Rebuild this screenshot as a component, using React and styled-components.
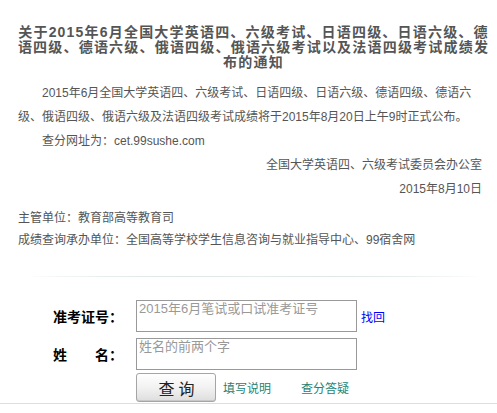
import React from "react";
import styled, { createGlobalStyle } from "styled-components";

const GlobalStyle = createGlobalStyle`
  html, body { margin: 0; padding: 0; background: #fff; }
  body { font-family: "Liberation Sans", "Noto Sans CJK SC", sans-serif; }
`;

const Page = styled.div`
  width: 497px;
  background: #fff;
`;

const Article = styled.div`
  padding: 25px 15px 0 18px;
  color: #555;
`;

const Title = styled.h1`
  margin: 0 -15px 0 -8px;
  font-size: 14px;
  font-weight: bold;
  line-height: 15px;
  letter-spacing: 1.2px;
  text-align: center;
  color: #555;
  white-space: nowrap;
`;

const Body = styled.div`
  margin-top: 11px;
  font-size: 12px;
  line-height: 24px;
`;

const Para = styled.p`
  margin: 0;
  text-indent: ${(p) => (p.$indent ? "24px" : "0")};
  text-align: ${(p) => (p.$right ? "right" : "left")};
`;

const Info = styled.div`
  margin-top: 6px;
  font-size: 12px;
  line-height: 22px;
`;

const Divider = styled.div`
  margin: 25px -1px 0 7px;
  height: 1px;
  background: linear-gradient(90deg, rgba(196, 210, 210, 0) 0%, #c2d0d0 50%, rgba(196, 210, 210, 0) 100%);
  &::after {
    content: "";
    display: block;
    height: 1px;
    margin-top: 1px;
    background: linear-gradient(90deg, rgba(230, 236, 236, 0) 0%, #e6ecec 50%, rgba(230, 236, 236, 0) 100%);
  }
`;

const QueryForm = styled.form`
  margin: 0;
  padding: 23px 0 1px 53px;
  border-bottom: 1px solid #ddd;
`;

const FieldRow = styled.div`
  display: flex;
  align-items: center;
  margin-bottom: ${(p) => p.$gap}px;
`;

const Label = styled.label`
  width: 83px;
  font-family: "Noto Sans CJK SC", sans-serif;
  font-size: 14px;
  font-weight: bold;
  color: #000;
  white-space: pre;
`;

const Field = styled.textarea`
  display: block;
  box-sizing: border-box;
  width: 221px;
  height: 32px;
  margin: 0;
  padding: 0 2px;
  border: 1px solid #999;
  font-family: "Liberation Sans", "Noto Sans CJK SC", sans-serif;
  font-size: 13px;
  line-height: 15px;
  resize: none;
  overflow: hidden;
  outline: none;
  &::placeholder { color: #999; }
`;

const FindLink = styled.a`
  margin-left: 4px;
  font-size: 12px;
  color: #0000ff;
  text-decoration: none;
`;

const ActionRow = styled.div`
  display: flex;
  align-items: center;
  padding-left: 83px;
`;

const QueryButton = styled.button`
  box-sizing: border-box;
  width: 80px;
  height: 29px;
  padding: 0 0 0 5px;
  border: 1px solid #a5a5a5;
  border-radius: 3px;
  background: linear-gradient(#fefefe 0%, #f2f2f2 50%, #dedede 100%);
  box-shadow: inset 0 -1px 0 #c8c8c8;
  font-family: "Noto Sans CJK SC", sans-serif;
  font-size: 16px;
  letter-spacing: 4px;
  color: #222;
`;

const TealLink = styled.a`
  margin-left: ${(p) => p.$gap}px;
  font-size: 12px;
  color: #268272;
  text-decoration: none;
`;

export default function App() {
  return (
    <Page>
      <GlobalStyle />
      <Article>
        <Title>
          关于2015年6月全国大学英语四、六级考试、日语四级、日语六级、德
          <br />
          语四级、德语六级、俄语四级、俄语六级考试以及法语四级考试成绩发
          <br />
          布的通知
        </Title>
        <Body>
          <Para $indent>
            2015年6月全国大学英语四、六级考试、日语四级、日语六级、德语四级、德语六级、俄语四级、俄语六级及法语四级考试成绩将于2015年8月20日上午9时正式公布。
          </Para>
          <Para $indent>查分网址为：cet.99sushe.com</Para>
          <Para $right>全国大学英语四、六级考试委员会办公室</Para>
          <Para $right>2015年8月10日</Para>
        </Body>
        <Info>
          <Para>主管单位：教育部高等教育司</Para>
          <Para>成绩查询承办单位：全国高等学校学生信息咨询与就业指导中心、99宿舍网</Para>
        </Info>
        <Divider />
      </Article>
      <QueryForm onSubmit={(e) => e.preventDefault()}>
        <FieldRow $gap={6}>
          <Label>准考证号：</Label>
          <Field placeholder="2015年6月笔试或口试准考证号" />
          <FindLink href="#">找回</FindLink>
        </FieldRow>
        <FieldRow $gap={3}>
          <Label>姓　　名：</Label>
          <Field placeholder="姓名的前两个字" />
        </FieldRow>
        <ActionRow>
          <QueryButton type="submit">查询</QueryButton>
          <TealLink href="#" $gap={7}>填写说明</TealLink>
          <TealLink href="#" $gap={30}>查分答疑</TealLink>
        </ActionRow>
      </QueryForm>
    </Page>
  );
}
